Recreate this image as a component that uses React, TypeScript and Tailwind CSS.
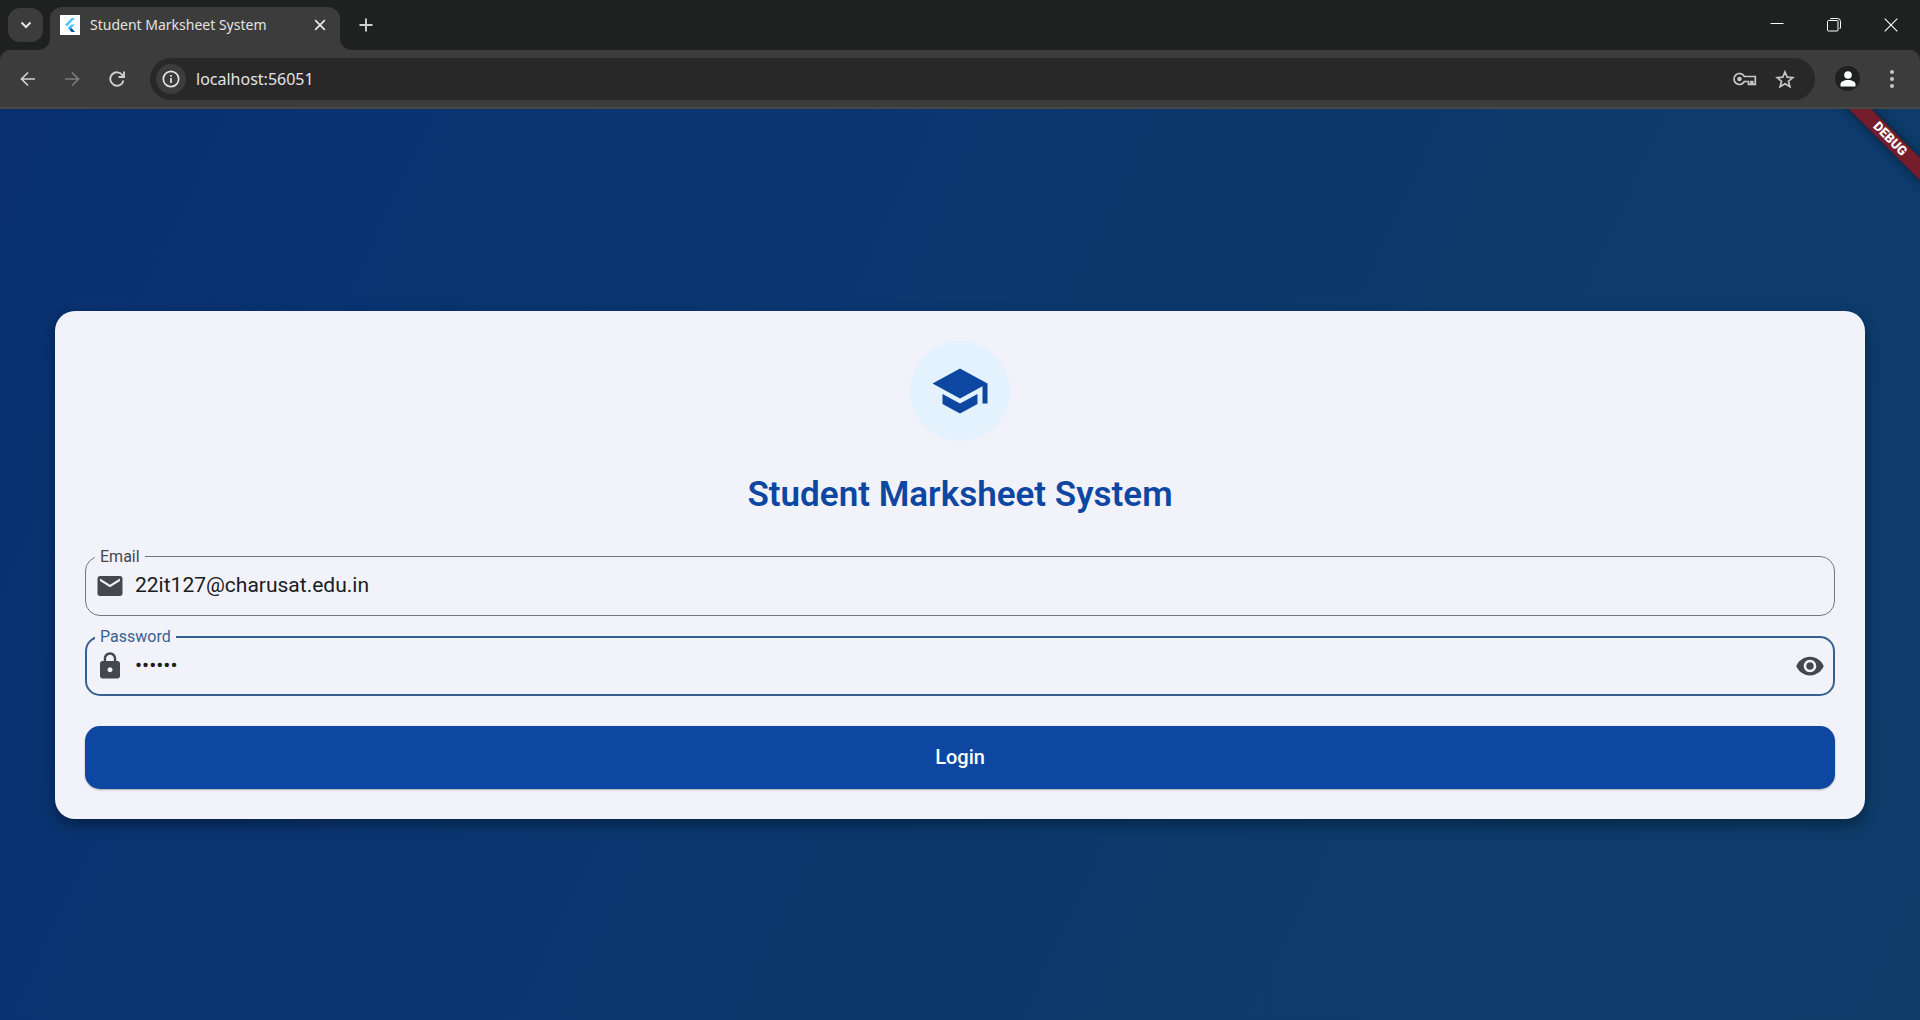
import { useState } from "react";
import type { ReactNode } from "react";
import { MdEmail, MdLock, MdSchool, MdVisibility } from "react-icons/md";

function FlutterLogo() {
  return (
    <svg viewBox="0 0 20 20" className="size-5 shrink-0" aria-hidden="true">
      <rect width="20" height="20" fill="#fff" />
      <path d="M11.5 3H15L7 11.5 5 9.8z" fill="#54c5f8" />
      <path d="M11.3 9.4H15L11.5 13 9.4 11.4z" fill="#54c5f8" />
      <path d="M7.8 13l1.8-1.8 2 1.9-1.9 1.9z" fill="#29b6f6" />
      <path d="M9.7 15l1.9-1.9L15 17h-3.6z" fill="#01579b" />
    </svg>
  );
}

function TabStrip() {
  return (
    <div className="flex h-[50px] items-end">
      <div className="flex h-[42px] shrink-0 items-start pl-2">
        <button
          aria-label="Search tabs"
          className="flex h-[34px] w-[35px] items-center justify-center rounded-xl bg-[#3c3c3c]"
        >
          <svg viewBox="0 0 12 8" className="h-2 w-3" fill="none" stroke="#e3e3e3" strokeWidth="2">
            <path d="M1.5 1.5 6 6l4.500-4.500" />
          </svg>
        </button>
      </div>
      <div className="relative ml-[7px] flex h-[43px] w-[290px] shrink-0 items-center rounded-t-xl bg-[#3c3c3c] pr-[14px] pb-[7px] pl-[10px]">
        <svg viewBox="0 0 12 12" className="absolute bottom-0 -left-3 size-3" fill="#3c3c3c" aria-hidden="true">
          <path d="M12 0v12H0A12 12 0 0 0 12 0z" />
        </svg>
        <svg viewBox="0 0 12 12" className="absolute -right-3 bottom-0 size-3" fill="#3c3c3c" aria-hidden="true">
          <path d="M0 0v12h12A12 12 0 0 1 0 0z" />
        </svg>
        <FlutterLogo />
        <span className="ml-[10px] flex-1 truncate text-[14px] leading-5 text-[#e3e3e3]">
          Student Marksheet System
        </span>
        <button aria-label="Close tab" className="flex size-3 items-center justify-center">
          <svg viewBox="0 0 12 12" className="size-3" fill="none" stroke="#e3e3e3" strokeWidth="1.800">
            <path d="M1.200 1.200l9.600 9.600M10.800 1.200l-9.600 9.600" />
          </svg>
        </button>
      </div>
      <button aria-label="New tab" className="mb-[18px] ml-[19px] flex size-[14px] items-center justify-center">
        <svg viewBox="0 0 14 14" className="size-[14px]" fill="none" stroke="#d0d0d0" strokeWidth="1.900">
          <path d="M7 .500v13M.500 7h13" />
        </svg>
      </button>
      <div className="mb-[18px] ml-auto flex items-center gap-[43px] pr-[22px]">
        <button aria-label="Minimize" className="flex size-[14px] items-center">
          <svg viewBox="0 0 14 14" className="size-[14px]" stroke="#fff" strokeWidth="1">
            <path d="M.500 5.500h13" />
          </svg>
        </button>
        <button aria-label="Restore" className="flex size-[14px] items-center">
          <svg viewBox="0 0 14 14" className="size-[14px]" fill="none" stroke="#fff" strokeWidth="1">
            <rect x=".5" y="2.500" width="10.500" height="10.500" rx="1" />
            <path d="M3 1Q3.500.500 5 .500h5.500a3 3 0 0 1 3 3V9q0 1.500-1 2" />
          </svg>
        </button>
        <button aria-label="Close window" className="flex size-[14px] items-center">
          <svg viewBox="0 0 14 14" className="size-[14px]" fill="none" stroke="#fff" strokeWidth="1.100">
            <path d="M.700.700l12.600 12.600M13.300.700.700 13.300" />
          </svg>
        </button>
      </div>
    </div>
  );
}

function Toolbar() {
  return (
    <div className="flex h-[59px] items-center rounded-t-[10px] border-b-2 border-[#474747] bg-[#3c3c3c] pr-[25px] pl-5">
      <button aria-label="Back" className="flex size-4 items-center">
        <svg viewBox="0 0 16 16" className="size-4" fill="none" stroke="#d0d0d0" strokeWidth="1.700">
          <path d="M15 8H1.500M8 1.500 1.500 8 8 14.500" />
        </svg>
      </button>
      <button aria-label="Forward" disabled className="ml-[29px] flex size-4 items-center">
        <svg viewBox="0 0 16 16" className="size-4" fill="none" stroke="#7c7c7c" strokeWidth="1.700">
          <path d="M0 8h13.500M7 1.500 13.500 8 7 14.500" />
        </svg>
      </button>
      <button aria-label="Reload" className="ml-7 flex size-4 items-center">
        <svg viewBox="0 0 16 16" className="size-4" fill="none" stroke="#d0d0d0" strokeWidth="1.900">
          <path d="M14.500 9.500A6.700 6.700 0 1 1 13.600 4.400L15 6" />
          <path d="M15 .500V6H9.500" />
        </svg>
      </button>
      <div className="ml-[25px] flex h-[42px] flex-1 items-center rounded-full bg-[#282828] pr-5 pl-[6px]">
        <button
          aria-label="View site information"
          className="flex size-[30px] shrink-0 items-center justify-center rounded-full bg-[#3c3c3c]"
        >
          <svg viewBox="0 0 18 18" className="size-[18px]" fill="none" stroke="#e3e3e3" strokeWidth="1.700">
            <circle cx="9" cy="9" r="7.700" />
            <path d="M9 8v5M9 5v1.800" />
          </svg>
        </button>
        <input
          aria-label="Address"
          defaultValue="localhost:56051"
          className="ml-[10px] h-6 min-w-0 flex-1 bg-transparent text-[16px] text-[#e3e3e3] outline-none"
        />
        <button aria-label="Manage passwords" className="flex h-4 w-6 items-center">
          <svg viewBox="0 0 24 16" className="h-4 w-6" fill="none" stroke="#c7c7c7" strokeWidth="1.700">
            <path d="M11.400 5.500A5.500 5.500 0 1 0 11.400 10.500H15.500V13.300H18V10.500H19.700V13.300H22.300V5.500z" />
            <circle cx="6.500" cy="8" r="2.300" fill="#c7c7c7" stroke="none" />
          </svg>
        </button>
        <button aria-label="Bookmark this tab" className="ml-[18px] flex size-5 items-center">
          <svg viewBox="0 0 20 20" className="size-5" fill="none" stroke="#c7c7c7" strokeWidth="1.700">
            <path d="M10 3l2.200 5.200 5.600.400-4.300 3.600 1.400 5.500L10 14.800l-4.900 2.900 1.400-5.500L2.200 8.600l5.600-.4z" />
          </svg>
        </button>
      </div>
      <button aria-label="Profile" className="ml-5 flex size-[25px] items-center justify-center rounded-full bg-[#1f2120]">
        <svg viewBox="0 0 16 16" className="size-4" fill="#fff">
          <circle cx="8" cy="4" r="3.800" />
          <path d="M.500 15.500v-2.500c0-2.300 3.500-4 7.500-4s7.500 1.700 7.500 4v2.500z" />
        </svg>
      </button>
      <button aria-label="Menu" className="ml-[29px] flex h-5 w-[6px] items-center justify-center">
        <svg viewBox="0 0 4 18" className="h-[18px] w-1" fill="#c7c7c7">
          <circle cx="2" cy="2" r="2" />
          <circle cx="2" cy="9" r="2" />
          <circle cx="2" cy="16" r="2" />
        </svg>
      </button>
    </div>
  );
}

function DebugBanner() {
  return (
    <div className="pointer-events-none absolute top-0 right-0 size-24 overflow-hidden">
      <div className="absolute top-[22px] -right-[30px] h-4 w-[120px] rotate-45 bg-[#751d2b] text-center text-[13px] leading-4 font-black text-white shadow-[0_0_8px_rgba(0,0,0,0.5)]">
        DEBUG
      </div>
    </div>
  );
}

type FieldProps = {
  id: string;
  label: string;
  type: string;
  value: string;
  onChange: (value: string) => void;
  icon: ReactNode;
  active?: boolean;
  action?: ReactNode;
};

function Field({ id, label, type, value, onChange, icon, active, action }: FieldProps) {
  return (
    <fieldset
      className={
        active
          ? "h-[67px] rounded-[15px] border-2 border-[#36618e] px-2"
          : "h-[67px] rounded-[15px] border border-[#73777f] px-[9px]"
      }
    >
      <legend className={active ? "px-[5px] text-[#36618e]" : "px-[5px] text-[#43474e]"}>
        <label htmlFor={id} className="block text-[16px] leading-4">
          {label}
        </label>
      </legend>
      <div className="flex h-[42px] items-center text-[#43474e]">
        {icon}
        <input
          id={id}
          type={type}
          value={value}
          onChange={(e) => onChange(e.target.value)}
          className="ml-[10px] h-7 min-w-0 flex-1 bg-transparent text-[21px] text-[#191c20] outline-none"
        />
        {action}
      </div>
    </fieldset>
  );
}

export default function App() {
  const [email, setEmail] = useState("22it127@charusat.edu.in");
  const [password, setPassword] = useState("123456");
  const [visible, setVisible] = useState(false);

  return (
    <div className="flex min-h-screen flex-col bg-[#1f2120]">
      <header className="font-['Noto_Sans',sans-serif]">
        <TabStrip />
        <Toolbar />
      </header>
      <main className="relative flex flex-1 items-center bg-[linear-gradient(115deg,#08306f,#0a3670_35%,#0c3a6b_65%,#0d3c69)] px-[55px] font-['Roboto',sans-serif]">
        <DebugBanner />
        <form
          onSubmit={(e) => e.preventDefault()}
          className="flex flex-1 flex-col rounded-[20px] bg-[#f2f2fb] p-[30px] shadow-[0_6px_14px_rgba(0,0,0,0.35)]"
        >
          <div className="flex size-[100px] items-center justify-center self-center rounded-full bg-[#e3f2fd]">
            <MdSchool className="size-[60px] text-[#0d47a1]" />
          </div>
          <h1 className="mt-[31px] text-center text-[35px] leading-[45px] font-semibold text-[#0d47a1]">
            Student Marksheet System
          </h1>
          <div className="mt-8 flex flex-col gap-[13px]">
            <Field
              id="email"
              label="Email"
              type="email"
              value={email}
              onChange={setEmail}
              icon={<MdEmail className="size-[30px] shrink-0" />}
            />
            <Field
              id="password"
              label="Password"
              type={visible ? "text" : "password"}
              value={password}
              onChange={setPassword}
              active
              icon={<MdLock className="size-[30px] shrink-0" />}
              action={
                <button type="button" aria-label="Show password" onClick={() => setVisible(!visible)}>
                  <MdVisibility className="size-[30px]" />
                </button>
              }
            />
          </div>
          <button
            type="submit"
            className="mt-[30px] h-[63px] rounded-[15px] bg-[#0d47a1] text-[20px] font-medium text-white shadow-[0_1px_2px_rgba(0,0,0,0.3)]"
          >
            Login
          </button>
        </form>
      </main>
    </div>
  );
}
